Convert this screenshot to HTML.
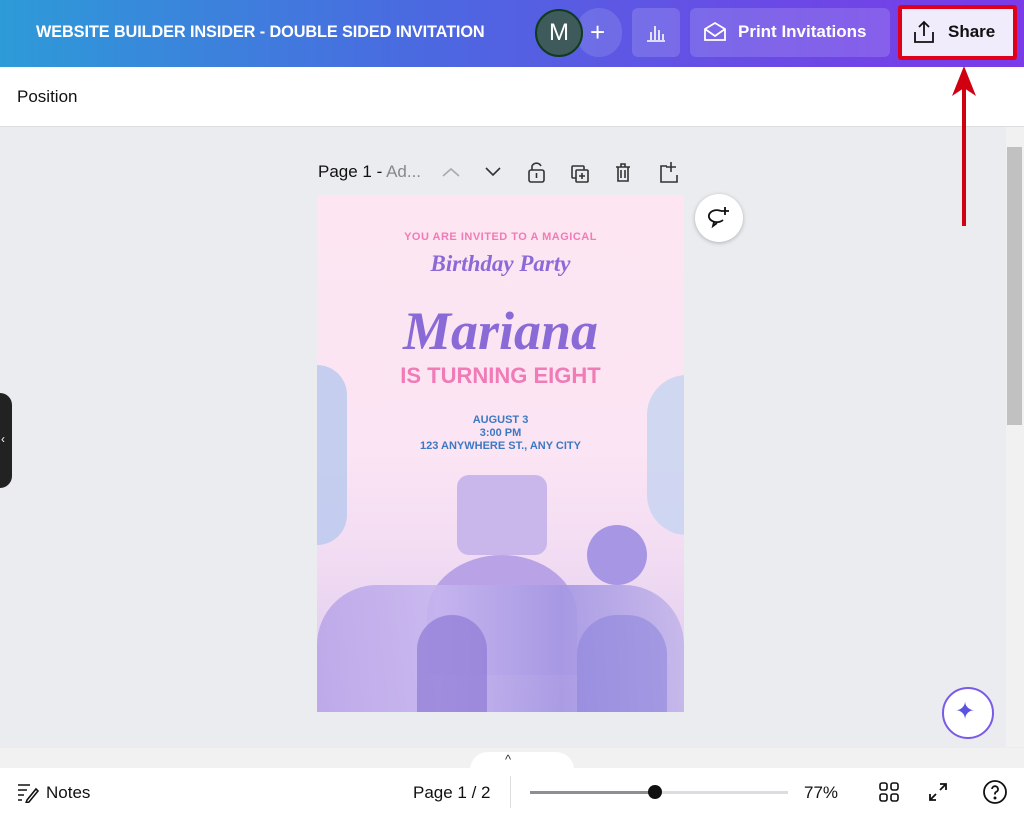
<!DOCTYPE html>
<html><head><meta charset="utf-8"><style>
*{margin:0;padding:0;box-sizing:border-box}
body{width:1024px;height:816px;overflow:hidden;font-family:"Liberation Sans",sans-serif;background:#ebecf0;position:relative}
.top{position:absolute;left:0;top:0;width:1024px;height:67px;background:linear-gradient(90deg,#2d9bd8 0%,#4a6ae0 40%,#6a4ae6 75%,#7a3be8 100%)}
.abs{position:absolute}
.title{left:36px;top:23px;color:#fff;font-weight:bold;font-size:16.3px;letter-spacing:-.1px}
.btn{background:rgba(255,255,255,.15);border-radius:6px}
.pos{left:0;top:67px;width:1024px;height:60px;background:#fff;border-bottom:1px solid #dcdde0}
.bottom{left:0;top:768px;width:1024px;height:48px;background:#fff}
</style></head><body>
<div class="top">
 <div class="abs title">WEBSITE BUILDER INSIDER - DOUBLE SIDED INVITATION</div>
 <div class="abs" style="left:576px;top:8px;width:46px;height:49px;border-radius:24px;background:rgba(255,255,255,.12)"></div>
 <div class="abs" style="left:590px;top:17px;color:#fff;font-size:26px;line-height:30px">+</div>
 <div class="abs" style="left:535px;top:9px;width:48px;height:48px;border-radius:50%;background:#3e5a5a;border:2px solid #0f3b1f;color:#fff;font-size:24px;text-align:center;line-height:44px">M</div>
 <div class="abs btn" style="left:632px;top:8px;width:48px;height:49px"></div>
 <svg class="abs" style="left:644px;top:20px" width="24" height="24" viewBox="0 0 24 24" fill="none" stroke="#fff" stroke-width="1.6"><path d="M3 21h18M7 20V12M11 20V6M15 20V10M19 20V14"/></svg>
 <div class="abs btn" style="left:690px;top:8px;width:200px;height:49px"></div>
 <svg class="abs" style="left:702px;top:20px" width="26" height="24" viewBox="0 0 26 24" fill="none" stroke="#fff" stroke-width="1.8"><path d="M3 9l10-6 10 6v11H3z M3 9l10 7 10-7"/></svg>
 <div class="abs" style="left:738px;top:22px;color:#fff;font-weight:bold;font-size:17px">Print Invitations</div>
 <div class="abs" style="left:898px;top:5px;width:119px;height:55px;border:4px solid #e0001b;background:#f1ecfb;border-radius:3px"></div>
 <svg class="abs" style="left:911px;top:19px" width="26" height="26" viewBox="0 0 26 26" fill="none" stroke="#111" stroke-width="1.8"><path d="M13 17V3M8 8l5-5 5 5M4 13v10h18V13"/></svg>
 <div class="abs" style="left:948px;top:22px;color:#111;font-weight:bold;font-size:17px">Share</div>
</div>
<div class="abs pos"><div class="abs" style="left:17px;top:20px;font-size:17px;color:#111">Position</div></div>
<svg class="abs" style="left:948px;top:62px" width="32" height="166" viewBox="0 0 32 166"><path d="M16 164V20" stroke="#d00010" stroke-width="4"/><path d="M4 34L16 4 28 34 16 26z" fill="#d00010"/></svg>
<div class="abs" style="left:318px;top:162px;font-size:17px;color:#111">Page 1 - <span style="color:#888">Ad...</span></div>
<svg class="abs" style="left:440px;top:160px" width="250" height="26" viewBox="0 0 250 26" fill="none" stroke="#333" stroke-width="1.6"><path d="M3 16l8-7 8 7" stroke="#aaa"/><path d="M46 8l7 7 7-7"/><rect x="89" y="10" width="15" height="12" rx="2"/><path d="M92 10V6a5 5 0 0 1 9 0M96.5 13v5"/><rect x="132" y="6" width="12" height="12" rx="1"/><rect x="136" y="10" width="12" height="12" rx="1" fill="#ebecf0"/><path d="M142 13v6M139 16h6"/><path d="M176 7h14M181 7V4h4v3M178 7v14h10V7M181 10v8M185 10v8"/><path d="M227 6h-6v16h16v-7M231 2v10M226 7h10"/></svg>
<div class="abs" style="left:317px;top:195px;width:367px;height:517px;background:linear-gradient(#fde6f2 0%,#fbe4f3 50%,#f2dcf3 70%,#d9c8ee 100%);overflow:hidden">
 <div class="abs" style="left:0;top:170px;width:30px;height:180px;background:#b8c8ee;border-radius:0 40px 40px 0;opacity:.8"></div>
 <div class="abs" style="left:330px;top:180px;width:40px;height:160px;background:#c6d3f0;border-radius:40px 0 0 40px;opacity:.8"></div>
 <div class="abs" style="left:140px;top:280px;width:90px;height:80px;background:#c9b6ea;border-radius:12px"></div>
 <div class="abs" style="left:110px;top:360px;width:150px;height:120px;background:#b9a3e6;border-radius:50% 50% 0 0"></div>
 <div class="abs" style="left:0;top:390px;width:367px;height:127px;background:linear-gradient(90deg,#bba6e8,#c6b5ef,#a597e3,#c4b6ea);border-radius:60px 60px 0 0;opacity:.9"></div>
 <div class="abs" style="left:100px;top:420px;width:70px;height:97px;background:#8e7ad6;border-radius:40px 40px 0 0;opacity:.7"></div>
 <div class="abs" style="left:260px;top:420px;width:90px;height:97px;background:#8e86dc;border-radius:40px 40px 0 0;opacity:.6"></div>
 <div class="abs" style="left:270px;top:330px;width:60px;height:60px;background:#a796e4;border-radius:50%"></div>
 <div class="abs" style="left:0;top:36px;width:367px;text-align:center;font-weight:bold;font-size:11px;color:#f07bb6;letter-spacing:.5px">YOU ARE INVITED TO A MAGICAL</div>
 <div class="abs" style="left:0;top:56px;width:367px;text-align:center;font-family:'Liberation Serif',serif;font-style:italic;font-weight:bold;font-size:23px;color:#8b6ad8">Birthday Party</div>
 <div class="abs" style="left:0;top:106px;width:367px;text-align:center;font-family:'Liberation Serif',serif;font-style:italic;font-weight:bold;font-size:54px;color:#8a6ad6;line-height:60px">Mariana</div>
 <div class="abs" style="left:0;top:168px;width:367px;text-align:center;font-weight:bold;font-size:22px;color:#f07bb6">IS TURNING EIGHT</div>
 <div class="abs" style="left:0;top:219px;width:367px;text-align:center;font-weight:bold;font-size:11px;color:#3d78c2;line-height:13px">AUGUST 3<br>3:00 PM<br>123 ANYWHERE ST., ANY CITY</div>
</div>
<div class="abs" style="left:695px;top:194px;width:48px;height:48px;border-radius:50%;background:#fff;box-shadow:0 1px 4px rgba(0,0,0,.25)"></div>
<svg class="abs" style="left:705px;top:204px" width="28" height="28" viewBox="0 0 28 28" fill="none" stroke="#111" stroke-width="1.8"><path d="M16 7a8 6 0 1 0 2 9 M9 18l-1 4 4-3M20 3v8M16 7h8"/></svg>
<div class="abs" style="left:0;top:393px;width:12px;height:95px;background:#222;border-radius:0 12px 12px 0"></div>
<div class="abs" style="left:1px;top:432px;color:#fff;font-size:12px">‹</div>
<div class="abs" style="left:1006px;top:127px;width:18px;height:620px;background:#f1f1f1"></div>
<div class="abs" style="left:1007px;top:147px;width:15px;height:278px;background:#c1c1c1"></div>
<div class="abs" style="left:0;top:748px;width:1024px;height:20px;background:#f1f1f1"></div>
<div class="abs" style="left:942px;top:687px;width:52px;height:52px;border-radius:50%;background:#fff;border:2px solid #7b5ae8"></div>
<div class="abs" style="left:955px;top:697px;color:#5a52e0;font-size:24px">✦</div>
<div class="abs" style="left:470px;top:752px;width:104px;height:20px;background:#fff;border-radius:18px 18px 0 0"></div>
<div class="abs" style="left:505px;top:752px;font-size:13px;color:#333">^</div>
<div class="abs bottom">
 <svg class="abs" style="left:17px;top:13px" width="22" height="22" viewBox="0 0 22 22" fill="none" stroke="#111" stroke-width="1.6"><path d="M1 4h12M1 9h9M1 14h6M1 19h4M10 19l9-11 2 2-9 11-3 1z"/></svg>
 <div class="abs" style="left:46px;top:15px;font-size:17px;color:#111">Notes</div>
 <div class="abs" style="left:413px;top:15px;font-size:17px;color:#111">Page 1 / 2</div>
 <div class="abs" style="left:510px;top:8px;width:1px;height:32px;background:#ddd"></div>
 <div class="abs" style="left:530px;top:23px;width:125px;height:3px;background:#8c8f94"></div>
 <div class="abs" style="left:655px;top:23px;width:133px;height:3px;background:#dcdde0"></div>
 <div class="abs" style="left:648px;top:17px;width:14px;height:14px;border-radius:50%;background:#111"></div>
 <div class="abs" style="left:804px;top:15px;font-size:17px;color:#111">77%</div>
 <svg class="abs" style="left:878px;top:13px" width="22" height="22" viewBox="0 0 22 22" fill="none" stroke="#111" stroke-width="1.6"><rect x="2" y="2" width="7" height="7" rx="2"/><rect x="13" y="2" width="7" height="7" rx="2"/><rect x="2" y="13" width="7" height="7" rx="2"/><rect x="13" y="13" width="7" height="7" rx="2"/></svg>
 <svg class="abs" style="left:926px;top:12px" width="24" height="24" viewBox="0 0 24 24" fill="none" stroke="#111" stroke-width="1.8"><path d="M14 4h6v6M20 4l-6 6M10 20H4v-6M4 20l6-6"/></svg>
 <svg class="abs" style="left:982px;top:11px" width="26" height="26" viewBox="0 0 26 26" fill="none" stroke="#111" stroke-width="1.8"><circle cx="13" cy="13" r="11"/><path d="M10 10a3 3 0 1 1 4 3c-1 .5-1 1-1 2.5"/><circle cx="13" cy="19" r=".6" fill="#111"/></svg>
</div>
</body></html>
